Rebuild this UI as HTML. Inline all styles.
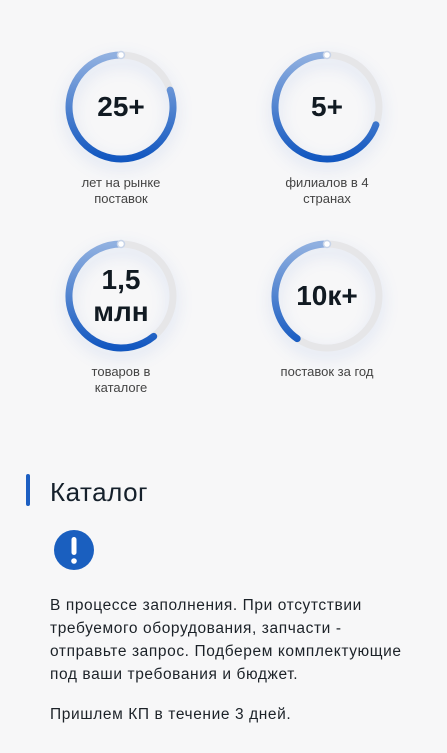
<!DOCTYPE html>
<html><head><meta charset="utf-8"><style>
body{margin:0;width:447px;height:753px;background:#f7f7f8;font-family:"Liberation Sans","DejaVu Sans",sans-serif;position:relative;overflow:hidden;color:#15202b}
.st{position:absolute;width:124px;height:124px}
.st svg{position:absolute;left:0;top:0;filter:drop-shadow(0 6px 8px rgba(30,90,200,0.15))}
.num{position:absolute;left:0;top:0;width:124px;height:124px;display:flex;align-items:center;justify-content:center;text-align:center;font-weight:bold;font-size:28px;line-height:32px;color:#111a22}
.lab{position:absolute;width:160px;text-align:center;font-size:13px;line-height:16px;color:#444}
h2{position:absolute;left:50px;top:474px;margin:0;font-size:26px;font-weight:normal;color:#15202b;line-height:36px;letter-spacing:0.5px}
.bar{position:absolute;left:26px;top:474px;width:4px;height:32px;background:#1d5fc2;border-radius:2px}
p{position:absolute;left:50px;margin:0;font-size:15.5px;letter-spacing:0.6px;line-height:23px;color:#1c2228;width:395px;white-space:nowrap}
</style></head><body>

<div class="st" style="left:59px;top:45px"><svg width="124" height="124" viewBox="0 0 124 124"><defs><linearGradient id="g1" gradientUnits="userSpaceOnUse" x1="0" y1="10" x2="0" y2="114"><stop offset="0" stop-color="#90b0e0"/><stop offset="1" stop-color="#1257c0"/></linearGradient></defs>
<circle cx="62" cy="62" r="52" fill="none" stroke="#e6e6e8" stroke-width="7"/>
<path d="M62 10 A52 52 0 1 0 111.2 45.1" fill="none" stroke="url(#g1)" stroke-width="7" stroke-linecap="round"/>
<circle cx="62" cy="10" r="3.5" fill="#fff" stroke="#c8d4e8" stroke-width="1.5"/></svg><div class="num">25+</div></div>
<div class="lab" style="left:41px;top:175px">лет на рынке<br>поставок</div>

<div class="st" style="left:265px;top:45px"><svg width="124" height="124" viewBox="0 0 124 124"><defs><linearGradient id="g2" gradientUnits="userSpaceOnUse" x1="0" y1="10" x2="0" y2="114"><stop offset="0" stop-color="#90b0e0"/><stop offset="1" stop-color="#1257c0"/></linearGradient></defs>
<circle cx="62" cy="62" r="52" fill="none" stroke="#e6e6e8" stroke-width="7"/>
<path d="M62 10 A52 52 0 1 0 110.9 79.8" fill="none" stroke="url(#g2)" stroke-width="7" stroke-linecap="round"/>
<circle cx="62" cy="10" r="3.5" fill="#fff" stroke="#c8d4e8" stroke-width="1.5"/></svg><div class="num">5+</div></div>
<div class="lab" style="left:247px;top:175px">филиалов в 4<br>странах</div>

<div class="st" style="left:59px;top:234px"><svg width="124" height="124" viewBox="0 0 124 124"><defs><linearGradient id="g3" gradientUnits="userSpaceOnUse" x1="0" y1="10" x2="0" y2="114"><stop offset="0" stop-color="#90b0e0"/><stop offset="1" stop-color="#1257c0"/></linearGradient></defs>
<circle cx="62" cy="62" r="52" fill="none" stroke="#e6e6e8" stroke-width="7"/>
<path d="M62 10 A52 52 0 1 0 94.7 102.4" fill="none" stroke="url(#g3)" stroke-width="7" stroke-linecap="round"/>
<circle cx="62" cy="10" r="3.5" fill="#fff" stroke="#c8d4e8" stroke-width="1.5"/></svg><div class="num">1,5<br>млн</div></div>
<div class="lab" style="left:41px;top:364px">товаров в<br>каталоге</div>

<div class="st" style="left:265px;top:234px"><svg width="124" height="124" viewBox="0 0 124 124"><defs><linearGradient id="g4" gradientUnits="userSpaceOnUse" x1="0" y1="10" x2="0" y2="114"><stop offset="0" stop-color="#90b0e0"/><stop offset="1" stop-color="#1257c0"/></linearGradient></defs>
<circle cx="62" cy="62" r="52" fill="none" stroke="#e6e6e8" stroke-width="7"/>
<path d="M62 10 A52 52 0 0 0 32.2 104.6" fill="none" stroke="url(#g4)" stroke-width="7" stroke-linecap="round"/>
<circle cx="62" cy="10" r="3.5" fill="#fff" stroke="#c8d4e8" stroke-width="1.5"/></svg><div class="num">10к+</div></div>
<div class="lab" style="left:247px;top:364px">поставок за год</div>

<div class="bar"></div>
<h2>Каталог</h2>
<svg style="position:absolute;left:54px;top:530px" width="40" height="40" viewBox="0 0 40 40"><circle cx="20" cy="20" r="20" fill="#1a5fbf"/><rect x="17.5" y="7" width="5" height="18" rx="2.5" fill="#fff"/><circle cx="20" cy="31" r="2.8" fill="#fff"/></svg>
<p style="top:594px">В процессе заполнения. При отсутствии<br>требуемого оборудования, запчасти -<br>отправьте запрос. Подберем комплектующие<br>под ваши требования и бюджет.</p>
<p style="top:703px">Пришлем КП в течение 3 дней.</p>
</body></html>
